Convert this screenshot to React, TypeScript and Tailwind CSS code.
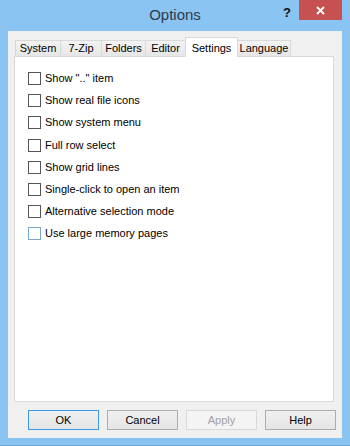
import React from 'react';

// ── Dados ────────────────────────────────────────────────────────────────
const TABS = [
  { label: 'System', w: 'w-[46px]' },
  { label: '7-Zip', w: 'w-[42px]' },
  { label: 'Folders', w: 'w-[45px]' },
  { label: 'Editor', w: 'w-[41px]' },
  { label: 'Settings', w: 'w-[53px]', active: true },
  { label: 'Language', w: 'w-[54px]' },
];

const OPTIONS = [
  'Show ".." item',
  'Show real file icons',
  'Show system menu',
  'Full row select',
  'Show grid lines',
  'Single-click to open an item',
  'Alternative selection mode',
  'Use large memory pages',
];

const BUTTONS = [
  { label: 'OK', kind: 'default' },
  { label: 'Cancel', kind: 'normal' },
  { label: 'Apply', kind: 'disabled' },
  { label: 'Help', kind: 'normal' },
];

function Checkbox({ hover }: { hover?: boolean }) {
  return (
    <span
      className={`block w-[13px] h-[13px] shrink-0 bg-white border ${hover ? 'border-[#7aa7cf]' : 'border-[#555]'}`}
    />
  );
}

export default function App() {
  return (
    <div
      className="w-[350px] h-[446px] bg-[#8ac4f3] relative overflow-hidden text-[11px] text-black"
      style={{ fontFamily: '"Liberation Sans", Arial, sans-serif' }}
    >
      {/* Barra de título */}
      <div className="h-[31px] flex items-center justify-center">
        <span className="text-[15px] text-[#2e3a4a] -mt-[1px]">Options</span>
      </div>
      <span className="absolute left-[283px] top-[3px] text-[13px] font-bold text-[#111]">?</span>
      <div className="absolute left-[299px] top-0 w-[43px] h-[20px] bg-[#c75050] flex items-center justify-center">
        <svg width="9" height="9" viewBox="0 0 9 9">
          <path d="M1 1 L8 8 M8 1 L1 8" stroke="white" strokeWidth="1.8" />
        </svg>
      </div>

      {/* Área do cliente */}
      <div className="mx-[8px] h-[407px] bg-[#f0f0f0] flex flex-col pt-[9px]">
        {/* Abas */}
        <div className="flex items-end h-[16px] ml-[7px] relative z-10">
          {TABS.map(t =>
            t.active ? (
              <div
                key={t.label}
                className={`${t.w} h-[20px] -mb-[1px] -ml-[1px] relative z-10 self-end bg-white border border-b-0 border-[#d9d9d9] flex justify-center pt-[2px]`}
              >
                {t.label}
              </div>
            ) : (
              <div
                key={t.label}
                className={`${t.w} h-[16px] bg-gradient-to-b from-[#f3f3f3] to-[#e6e6e6] border border-b-0 border-[#d9d9d9] -ml-[1px] first:ml-0 flex justify-center items-center`}
              >
                {t.label}
              </div>
            )
          )}
        </div>

        {/* Painel */}
        <div className="ml-[6px] w-[320px] h-[346px] bg-white border border-[#d9d9d9] pl-[13px] pt-[15px]">
          {OPTIONS.map((o, i) => (
            <div key={o} className="h-[22.2px] flex items-start gap-[4px]">
              <Checkbox hover={i === OPTIONS.length - 1} />
              <span className="leading-[13px]">{o}</span>
            </div>
          ))}
        </div>

        {/* Botões */}
        <div className="flex gap-[8px] ml-[20px] mt-[8px]">
          {BUTTONS.map(b => (
            <div
              key={b.label}
              className={`w-[71px] h-[20px] flex items-center justify-center border
                ${b.kind === 'default'
                  ? 'border-[#3c9be8] bg-gradient-to-b from-[#f0f0f0] to-[#e5e5e5]'
                  : b.kind === 'disabled'
                    ? 'border-[#d9d9d9] bg-[#f4f4f4] text-[#a0a0a0]'
                    : 'border-[#acacac] bg-gradient-to-b from-[#f0f0f0] to-[#e5e5e5]'}`}
            >
              {b.label}
            </div>
          ))}
        </div>
      </div>
      <div className="absolute left-0 right-0 bottom-0 h-[1px] bg-[#6fa8d8]" />
    </div>
  );
}
